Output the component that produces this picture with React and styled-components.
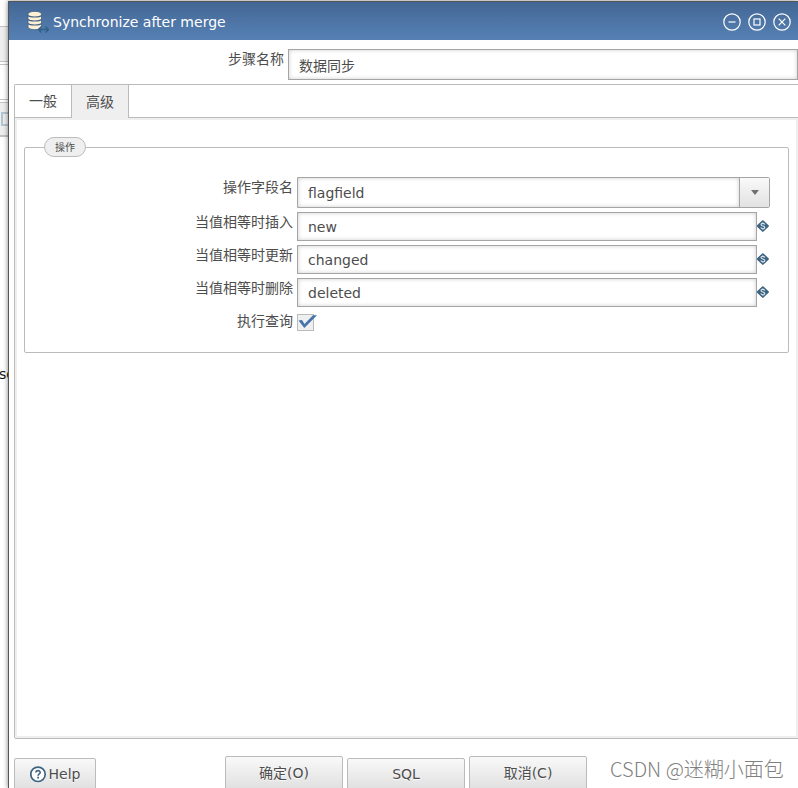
import React, { useState } from "react";
import styled, { createGlobalStyle } from "styled-components";

const GlobalStyle = createGlobalStyle`
  * {
    box-sizing: border-box;
  }

  body {
    margin: 0;
    background: #fff;
    color: #4d4d4d;
    font-family: "DejaVu Sans", "Noto Sans CJK SC", sans-serif;
    font-size: 14px;
    line-height: 20px;
  }

  button, input, select {
    font: inherit;
    color: inherit;
  }
`;

const Page = styled.div`
  display: flex;
  height: 100vh;
  overflow: hidden;
`;

const Behind = styled.aside`
  flex: 0 0 8px;
  overflow: hidden;
  padding-top: 26px;
`;

const Strip = styled.div`
  display: flex;
  align-items: center;
  height: ${(props) => props.$height}px;
  background: ${(props) => (props.$shaded ? "#efefef" : "#fff")};
  border-top: 1px solid #c4c4c4;
  border-bottom: ${(props) => (props.$thick ? 2 : 1)}px solid #c4c4c4;
`;

const StripGap = styled.div`
  height: 2px;
`;

const StripBox = styled.span`
  flex: none;
  width: 14px;
  height: 14px;
  margin-left: 1px;
  border: 2px solid #b5c6d3;
`;

const BehindText = styled.p`
  margin: 227px 0 0 -1px;
  color: #111;
`;

const Dialog = styled.section`
  position: relative;
  flex: 1;
  min-width: 0;
  display: flex;
  flex-direction: column;
  margin-top: 1px;
  background: #fff;
  border-top: 1px solid #555;
  border-left: 1px solid #555;
  box-shadow: 0 0 5px rgba(0, 0, 0, 0.5);
`;

const TitleBar = styled.header`
  display: flex;
  align-items: center;
  flex: none;
  height: 38px;
  padding: 1px 7px 0 18px;
  background: linear-gradient(#436794, #5681b5);
  color: #fff;
`;

const Title = styled.h1`
  flex: 1;
  margin: 0 0 0 4px;
  font-size: 14px;
  font-weight: normal;
`;

const WindowButtons = styled.div`
  display: flex;
  gap: 7px;
`;

const WindowButton = styled.button`
  display: flex;
  padding: 0;
  border: none;
  background: none;
  color: #fff;
  cursor: pointer;
`;

const NameRow = styled.div`
  display: grid;
  grid-template-columns: 275px 1fr;
  column-gap: 4px;
  flex: none;
  padding-top: 9px;
`;

const Label = styled.label`
  text-align: right;
`;

const TextInput = styled.input`
  width: 100%;
  min-width: 0;
  height: ${(props) => (props.$tall ? 31 : 29)}px;
  padding: 0 10px;
  border: 1px solid #a5a5a5;
  border-radius: 0;
  background: #fff;
  box-shadow: inset 0 0 4px rgba(0, 0, 0, 0.2);
  outline: none;
`;

const Main = styled.main`
  flex: 1;
  display: flex;
  flex-direction: column;
  min-height: 0;
  padding: 4px 0 0 5px;
`;

const Tabs = styled.div`
  display: flex;
  flex: none;
  border: 1px solid #bbb;
  border-right: none;
  border-radius: 2px 0 0 0;
`;

const Tab = styled.button`
  height: ${(props) => (props.$active ? 33 : 32)}px;
  margin-bottom: ${(props) => (props.$active ? -1 : 0)}px;
  padding: 0 14px;
  border: none;
  border-right: 1px solid #bbb;
  background: ${(props) => (props.$active ? "#efefef" : "#fff")};
  cursor: pointer;
`;

const Panel = styled.div`
  flex: 1;
  padding: 17px 7px 0;
  border: 2px solid #efefef;
  box-shadow: -1px 0 0 #bbb, 0 1px 0 #bbb;
  margin-left: 1px;
`;

const Group = styled.fieldset`
  min-width: 0;
  margin: 0;
  padding: 20px 18px 21px 0;
  border: 1px solid #bbb;
  border-radius: 2px;
`;

const Legend = styled.legend`
  height: 20px;
  margin-left: 19px;
  padding: 0 10px;
  border: 1px solid #bbb;
  border-radius: 10px;
  background: #efefef;
  font-size: 10px;
  line-height: 19px;
`;

const Fields = styled.div`
  display: grid;
  grid-template-columns: 268px 1fr;
  gap: 4px;
`;

const VariableField = styled.div`
  display: flex;
  align-items: center;
`;

const SelectBox = styled.div`
  display: flex;
  height: 31px;
  border: 1px solid #a5a5a5;
  border-radius: 0 2px 2px 0;
`;

const Select = styled.select`
  flex: 1;
  min-width: 0;
  padding: 0 10px;
  border: none;
  appearance: none;
  background: #fff;
  box-shadow: inset 0 0 4px rgba(0, 0, 0, 0.2);
  outline: none;
`;

const SelectArrow = styled.span`
  display: flex;
  align-items: center;
  justify-content: center;
  width: 30px;
  border-left: 1px solid #a5a5a5;
  background: linear-gradient(#f9f9f9, #e2e2e2);
`;

const CheckCell = styled.div`
  display: grid;
  justify-content: start;
  height: 20px;
  padding-top: 3px;

  > * {
    grid-area: 1 / 1;
  }

  > svg {
    pointer-events: none;
  }
`;

const Checkbox = styled.input`
  width: 17px;
  height: 17px;
  margin: 0;
  border: 1px solid #bbb;
  background: #efefef;
  appearance: none;
`;

const Footer = styled.footer`
  display: grid;
  grid-template-columns: 1fr auto 1fr;
  align-items: end;
  flex: none;
  height: 52px;
  margin: 0 0 -2px 5px;
`;

const Actions = styled.div`
  display: flex;
  align-items: flex-end;
  gap: 4px;
`;

const Button = styled.button`
  display: flex;
  align-items: center;
  justify-content: center;
  justify-self: start;
  gap: 2px;
  width: ${(props) => (props.$small ? 82 : 118)}px;
  height: ${(props) => (props.$tall ? 34 : 32)}px;
  padding: 0;
  border: 1px solid #bbb;
  border-radius: 2px;
  background: linear-gradient(#f9f9f9, #e0e0e0);
  text-shadow: 0 1px 1px #fff;
  cursor: pointer;
`;

const Watermark = styled.span`
  align-self: center;
  margin: 10px 0 0 23px;
  color: #808080;
  font-family: "Noto Sans CJK SC", sans-serif;
  font-size: 20px;
  font-weight: 300;
  line-height: 24px;
  white-space: nowrap;
`;

const DatabaseIcon = () => (
  <svg width="22" height="24" viewBox="0 0 22 24" aria-hidden="true">
    <path
      d="M1 4C1 0.500 14.500 0.500 14.500 4v13c0 3.500-13.500 3.500-13.500 0z"
      fill="#fff0d5"
      stroke="#3e6386"
      strokeWidth="0.800"
    />
    <path
      d="M1 5.500c2 1.900 11.500 1.900 13.500 0M1 9.500c2 1.900 11.500 1.900 13.500 0M1 13.500c2 1.900 11.500 1.900 13.500 0"
      fill="none"
      stroke="#3e6386"
      strokeWidth="1.100"
    />
    <path
      d="M12 19.500h9M14.500 16.500l-3 3 3 3M18.500 16.500l3 3-3 3"
      fill="none"
      stroke="#32618a"
      strokeWidth="1.500"
    />
  </svg>
);

const windowGlyphs = {
  minimize: <path d="M5.500 9h7" />,
  maximize: <rect x="6" y="6" width="6" height="6" />,
  close: <path d="M5.700 5.700l6.600 6.600M12.300 5.700l-6.600 6.600" />,
};

const WindowIcon = ({ name }) => (
  <svg
    width="18"
    height="18"
    viewBox="0 0 18 18"
    fill="none"
    stroke="currentColor"
    strokeWidth="1.200"
    aria-hidden="true"
  >
    <circle cx="9" cy="9" r="8.200" />
    {windowGlyphs[name]}
  </svg>
);

const VariableIcon = () => (
  <svg width="13" height="13" viewBox="0 0 13 13" aria-hidden="true">
    <path
      d="M6 1L11.200 6 6 11 0.800 6z"
      fill="#3d6480"
      stroke="#3d6480"
      strokeWidth="2"
      strokeLinejoin="round"
    />
    <path
      d="M8 4.600C7.600 2.900 4.100 2.900 4.200 4.700c.1 1.700 3.800 1 3.800 2.800 0 1.900-3.600 1.700-4 0"
      fill="none"
      stroke="#dce6ec"
      strokeWidth="1.200"
    />
    <path d="M6 2.300v1.200M6 8.700v1.200" stroke="#dce6ec" strokeWidth="1" />
  </svg>
);

const HelpIcon = () => (
  <svg width="17" height="17" viewBox="0 0 17 17" fill="none" aria-hidden="true">
    <circle cx="8" cy="8.300" r="7.200" fill="#fff" stroke="#3d6480" strokeWidth="1.700" />
    <path
      d="M5.900 6.600c0-2.700 4.300-2.600 4.300-.2 0 1.500-2.100 1.500-2.100 3.300"
      stroke="#3d6480"
      strokeWidth="1.600"
    />
    <path d="M7.200 10.800H9v1.600H7.200z" fill="#3d6480" />
  </svg>
);

const CheckMark = () => (
  <svg width="20" height="17" viewBox="0 0 20 17" aria-hidden="true">
    <path d="M1.500 6.500L5 6l2.500 4L16 1.300h4L7.300 14z" fill="#4474ab" />
  </svg>
);

const tabs = ["一般", "高级"];

const valueFields = [
  { id: "insert", label: "当值相等时插入", value: "new" },
  { id: "update", label: "当值相等时更新", value: "changed" },
  { id: "delete", label: "当值相等时删除", value: "deleted" },
];

const App = () => {
  const [activeTab, setActiveTab] = useState("高级");
  const [lookup, setLookup] = useState(true);

  return (
    <Page>
      <GlobalStyle />
      <Behind>
        <Strip $height={36} $shaded />
        <StripGap />
        <Strip $height={36} />
        <StripGap />
        <Strip $height={35} $shaded $thick>
          <StripBox />
        </Strip>
        <BehindText>sc</BehindText>
      </Behind>
      <Dialog>
        <TitleBar>
          <DatabaseIcon />
          <Title>Synchronize after merge</Title>
          <WindowButtons>
            {Object.keys(windowGlyphs).map((name) => (
              <WindowButton key={name} type="button" aria-label={name}>
                <WindowIcon name={name} />
              </WindowButton>
            ))}
          </WindowButtons>
        </TitleBar>
        <NameRow>
          <Label htmlFor="step-name">步骤名称</Label>
          <TextInput id="step-name" $tall defaultValue="数据同步" />
        </NameRow>
        <Main>
          <Tabs role="tablist">
            {tabs.map((tab) => (
              <Tab
                key={tab}
                type="button"
                role="tab"
                aria-selected={tab === activeTab}
                $active={tab === activeTab}
                onClick={() => setActiveTab(tab)}
              >
                {tab}
              </Tab>
            ))}
          </Tabs>
          <Panel>
            <Group>
              <Legend>操作</Legend>
              <Fields>
                <Label htmlFor="field-name">操作字段名</Label>
                <SelectBox>
                  <Select id="field-name" defaultValue="flagfield">
                    <option>flagfield</option>
                  </Select>
                  <SelectArrow>
                    <svg width="8" height="5" viewBox="0 0 8 5" aria-hidden="true">
                      <path d="M0 0h8L4 5z" fill="#707070" />
                    </svg>
                  </SelectArrow>
                </SelectBox>
                {valueFields.map((field) => (
                  <React.Fragment key={field.id}>
                    <Label htmlFor={field.id}>{field.label}</Label>
                    <VariableField>
                      <TextInput id={field.id} defaultValue={field.value} />
                      <VariableIcon />
                    </VariableField>
                  </React.Fragment>
                ))}
                <Label htmlFor="lookup">执行查询</Label>
                <CheckCell>
                  <Checkbox
                    id="lookup"
                    type="checkbox"
                    checked={lookup}
                    onChange={(e) => setLookup(e.target.checked)}
                  />
                  {lookup && <CheckMark />}
                </CheckCell>
              </Fields>
            </Group>
          </Panel>
        </Main>
        <Footer>
          <Button type="button" $small>
            <HelpIcon />
            Help
          </Button>
          <Actions>
            <Button type="button" $tall>确定(O)</Button>
            <Button type="button">SQL</Button>
            <Button type="button" $tall>取消(C)</Button>
          </Actions>
          <Watermark>CSDN @迷糊小面包</Watermark>
        </Footer>
      </Dialog>
    </Page>
  );
};

export default App;
